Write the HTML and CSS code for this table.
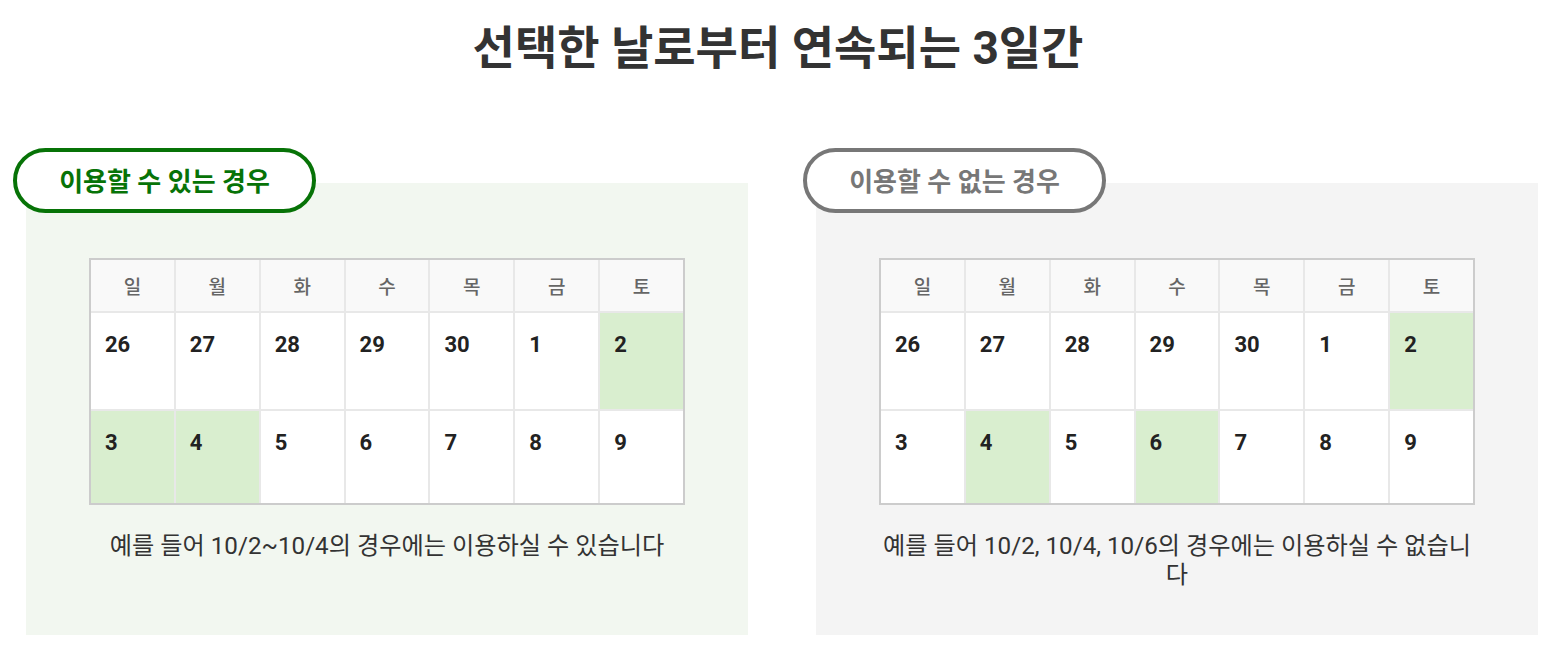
FILE: index.html
```html
<!DOCTYPE html>
<html lang="ko">
<head>
<meta charset="utf-8">
<link rel="stylesheet" href="styles.css">
</head>
<body>
<h1 class="title">선택한 날로부터 연속되는 3일간</h1>
<div class="panels">
  <section class="panel ok">
    <div class="badge">이용할 수 있는 경우</div>
    <div class="cal">
      <div class="hd">일</div><div class="hd">월</div><div class="hd">화</div><div class="hd">수</div><div class="hd">목</div><div class="hd">금</div><div class="hd">토</div>
      <div class="d r1">26</div><div class="d r1">27</div><div class="d r1">28</div><div class="d r1">29</div><div class="d r1">30</div><div class="d r1">1</div><div class="d r1 sel">2</div>
      <div class="d r2 sel">3</div><div class="d r2 sel">4</div><div class="d r2">5</div><div class="d r2">6</div><div class="d r2">7</div><div class="d r2">8</div><div class="d r2">9</div>
    </div>
    <p class="caption">예를 들어 10/2~10/4의 경우에는 이용하실 수 있습니다</p>
  </section>
  <section class="panel ng">
    <div class="badge">이용할 수 없는 경우</div>
    <div class="cal">
      <div class="hd">일</div><div class="hd">월</div><div class="hd">화</div><div class="hd">수</div><div class="hd">목</div><div class="hd">금</div><div class="hd">토</div>
      <div class="d r1">26</div><div class="d r1">27</div><div class="d r1">28</div><div class="d r1">29</div><div class="d r1">30</div><div class="d r1">1</div><div class="d r1 sel">2</div>
      <div class="d r2">3</div><div class="d r2 sel">4</div><div class="d r2">5</div><div class="d r2 sel">6</div><div class="d r2">7</div><div class="d r2">8</div><div class="d r2">9</div>
    </div>
    <p class="caption">예를 들어 10/2, 10/4, 10/6의 경우에는 이용하실 수 없습니다</p>
  </section>
</div>
</body>
</html>
```
FILE: styles.css
```css
* { box-sizing: border-box; }
html, body { margin: 0; padding: 0; background: #fff; }
body {
  font-family: Roboto, "Noto Sans CJK KR", sans-serif;
  color: #333;
  width: 1556px;
}
.title {
  margin: 0;
  padding-top: 20px;
  height: 183px;
  text-align: center;
  font-size: 46px;
  line-height: 56px;
  font-weight: 700;
  color: #333;
}
.panels {
  display: flex;
  gap: 68px;
  padding-left: 26px;
}
.panel {
  position: relative;
  width: 722px;
  height: 452px;
  padding: 75px 63px 0;
}
.panel.ok { background: #f2f7f0; }
.panel.ng { background: #f4f4f4; }
.badge {
  position: absolute;
  left: -13px;
  top: -35px;
  width: 303px;
  height: 65px;
  border: 4px solid #077307;
  border-radius: 33px;
  background: #fff;
  display: flex;
  align-items: center;
  justify-content: center;
  font-size: 26px;
  font-weight: 700;
  color: #077307;
  padding-bottom: 2px;
}
.panel.ng .badge { border-color: #777; color: #777; }
.cal {
  display: grid;
  grid-template-columns: repeat(7, 1fr);
  grid-template-rows: 51px 96px 92px;
  gap: 2px;
  width: 596px;
  border: 2px solid #ccc;
  background: #e8e8e8;
}
.hd {
  background: #f9f9f9;
  display: flex;
  align-items: center;
  justify-content: center;
  font-size: 19px;
  font-weight: 500;
  color: #666;
}
.d {
  background: #fff;
  padding: 18px 0 0 14px;
  font-size: 22px;
  line-height: 28px;
  font-weight: 700;
  color: #222;
}
.d.sel { background: #d9eecf; }
.caption {
  margin: 27px 0 0;
  text-align: center;
  font-size: 24.2px;
  line-height: 29px;
  color: #333;
}
```
